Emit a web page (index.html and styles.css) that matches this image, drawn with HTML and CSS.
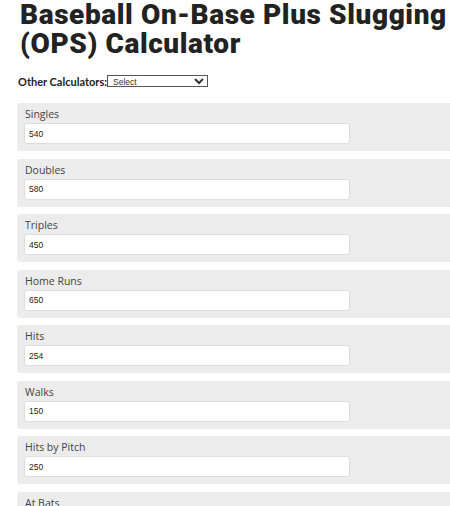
FILE: index.html
```html
<!DOCTYPE html>
<html>
<head>
<meta charset="utf-8">
<link rel="stylesheet" href="styles.css">
</head>
<body>
<h1 class="title">Baseball On-Base Plus Slugging (OPS) Calculator</h1>
<div class="other">
  <span class="other-label">Other Calculators:</span>
  <select class="other-select"><option>Select</option></select>
</div>
<div class="fields">
  <div class="field"><label class="field-label">Singles</label><input class="field-input" value="540"></div>
  <div class="field"><label class="field-label">Doubles</label><input class="field-input" value="580"></div>
  <div class="field"><label class="field-label">Triples</label><input class="field-input" value="450"></div>
  <div class="field"><label class="field-label">Home Runs</label><input class="field-input" value="650"></div>
  <div class="field"><label class="field-label">Hits</label><input class="field-input" value="254"></div>
  <div class="field"><label class="field-label">Walks</label><input class="field-input" value="150"></div>
  <div class="field"><label class="field-label">Hits by Pitch</label><input class="field-input" value="250"></div>
  <div class="field"><label class="field-label">At Bats</label><input class="field-input" value="600"></div>
</div>
</body>
</html>
```
FILE: styles.css
```css
html { overflow: hidden; }
body {
  margin: 0;
  background: #fff;
  font-family: "Open Sans", sans-serif;
}
.title {
  margin: 0;
  padding: 0 0 0 20px;
  font-family: Roboto, sans-serif;
  font-weight: 900;
  font-size: 28px;
  line-height: 29px;
  color: #222;
  width: 430px;
  letter-spacing: 0.6px;
}
.other {
  display: flex;
  align-items: center;
  margin: 16px 0 0 18px;
  height: 14px;
}
.other-label {
  font-family: Lato, sans-serif;
  font-weight: 700;
  font-size: 11px;
  color: #222;
}
.other-select {
  width: 101px;
  height: 12px;
  padding: 0 0 0 1px;
  border: 1px solid #555;
  border-radius: 0;
  font-family: "Liberation Sans", Arial, sans-serif;
  font-size: 8.5px;
  background: #fff;
  color: #333;
}
.fields {
  margin: 15px 0 0 17px;
  display: flex;
  flex-direction: column;
  gap: 7.5px;
  width: 445px;
}
.field {
  background: #ececec;
  border-radius: 3px;
  height: 48px;
  box-sizing: border-box;
  padding: 4px 0 0 7px;
  display: flex;
  flex-direction: column;
}
.field-label {
  font-family: "Open Sans", sans-serif;
  font-size: 10.5px;
  line-height: 14px;
  color: #444;
  padding-left: 1px;
}
.field-input {
  margin-top: 2px;
  width: 326px;
  height: 21px;
  box-sizing: border-box;
  border: 1px solid #ddd;
  border-radius: 3px;
  background: #fff;
  padding: 0 4px;
  font-family: "Liberation Sans", Arial, sans-serif;
  font-size: 8.5px;
  color: #222;
  outline: none;
}
```
